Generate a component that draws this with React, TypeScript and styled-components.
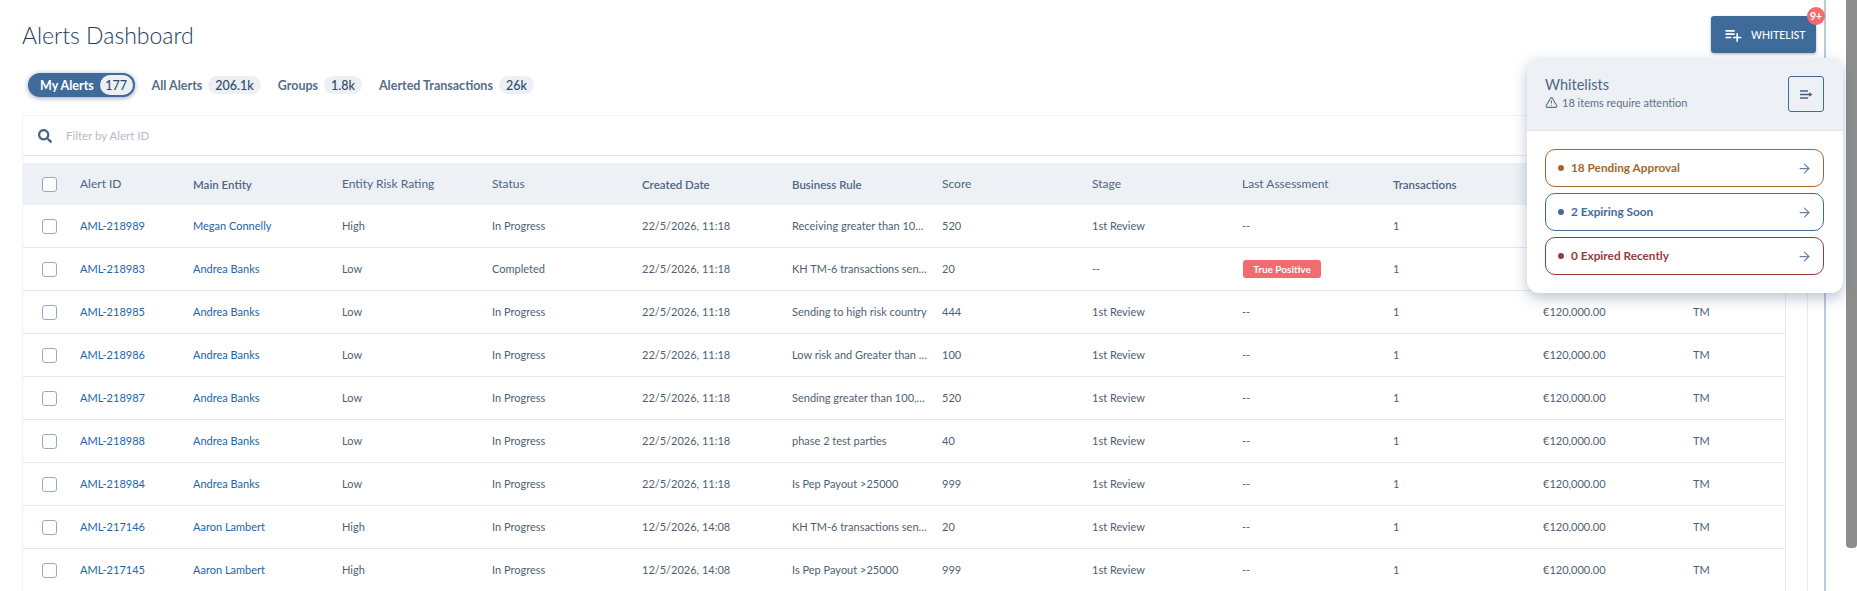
import styled, { createGlobalStyle } from 'styled-components';
import { ArrowRight, TriangleAlert } from 'lucide-react';
import { FaSearch } from 'react-icons/fa';
import { MdPlaylistAdd } from 'react-icons/md';

const GlobalStyle = createGlobalStyle`
  html, body {
    margin: 0;
    height: 100%;
    overflow: hidden;
    background: white;
  }
  * {
    box-sizing: border-box;
  }
`;

const COLUMNS = '57px 113px 149px repeat(6, 150px) 151px 150px 150px 92px';

const Page = styled.div`
  position: relative;
  display: flex;
  height: 591px;
  overflow: hidden;
  font-family: 'Lato', 'Liberation Sans', sans-serif;
  color: #46586d;
`;

const Main = styled.main`
  width: 1826px;
  padding: 16px 8px 0 22px;
  border-right: 2px solid #b9c8da;
`;

const TopBar = styled.header`
  display: flex;
  justify-content: space-between;
  align-items: flex-start;
  height: 37px;
`;

const Title = styled.h1`
  margin: 7px 0 0;
  font-size: 23px;
  line-height: 24px;
  font-weight: 300;
  color: #1c3c60;
`;

const WhitelistButton = styled.button`
  position: relative;
  display: flex;
  align-items: center;
  gap: 8px;
  width: 105px;
  height: 37px;
  padding: 0 0 0 12px;
  border: none;
  border-radius: 3px;
  background: #3f6b9b;
  box-shadow: 0 1px 3px rgba(40, 70, 110, 0.4);
  color: white;
  font-family: inherit;
  font-size: 10.5px;
  font-weight: 500;
`;

const Badge = styled.span`
  position: absolute;
  top: -9px;
  right: -9px;
  width: 18px;
  height: 18px;
  border-radius: 50%;
  background: #f26c6f;
  color: white;
  font-size: 10.5px;
  font-weight: 700;
  line-height: 18px;
  text-align: center;
`;

const Tabs = styled.nav`
  display: flex;
  align-items: center;
  gap: 17px;
  height: 24px;
  margin: 20px 0 18px 6px;
`;

const Tab = styled.div<{ $active?: boolean }>`
  display: flex;
  align-items: center;
  gap: 6px;
  height: 24px;
  padding: ${({ $active }) => ($active ? '0 2px 0 12px' : '0')};
  border-radius: 12px;
  background: ${({ $active }) => ($active ? '#3f6b9b' : 'transparent')};
  box-shadow: ${({ $active }) => ($active ? '0 1px 5px rgba(40, 70, 110, 0.5)' : 'none')};
  color: ${({ $active }) => ($active ? 'white' : '#566d88')};
  font-size: 12.5px;
  font-weight: 700;
`;

const Count = styled.span<{ $active?: boolean }>`
  display: flex;
  align-items: center;
  height: ${({ $active }) => ($active ? '20px' : '18px')};
  padding: 0 ${({ $active }) => ($active ? '5.5px' : '7px')};
  border-radius: 10px;
  background: #eceff3;
  color: #2f4a68;
  font-size: 12.5px;
  font-weight: 500;
`;

const Card = styled.section`
  width: 1786px;
  height: 476px;
  border-left: 1px solid #f2f3f6;
  border-top: 1px solid #f2f3f6;
  border-right: 1px solid #e8ebf0;
`;

const FilterBar = styled.div`
  display: flex;
  align-items: center;
  gap: 14px;
  height: 40px;
  padding-left: 15px;
  border-bottom: 1px solid #e2e5ec;
  margin-bottom: 7px;
`;

const SearchIcon = styled(FaSearch)`
  width: 14px;
  height: 14px;
  color: #466484;
`;

const FilterText = styled.span`
  color: #b3bcc7;
  font-size: 11.5px;
`;

const HeaderRow = styled.div`
  display: grid;
  grid-template-columns: ${COLUMNS};
  align-items: center;
  height: 42px;
  background: #edf1f5;
`;

const HeadCell = styled.div<{ $sorted?: boolean }>`
  padding-bottom: ${({ $sorted }) => ($sorted ? '0' : '2px')};
  color: #4e6581;
  font-size: ${({ $sorted }) => ($sorted ? '11.5px' : '12px')};
  font-weight: ${({ $sorted }) => ($sorted ? 600 : 400)};
  white-space: nowrap;
`;

const Body = styled.div`
  border-right: 1px solid #e8ebf0;
  margin-right: 21px;
`;

const Row = styled.div`
  display: grid;
  grid-template-columns: ${COLUMNS};
  align-items: center;
  height: 43px;
  border-bottom: 1px solid #e4e6ee;
`;

const Cell = styled.div<{ $link?: boolean }>`
  overflow: hidden;
  padding: 0 14px 2px 0;
  color: ${({ $link }) => ($link ? '#2264a8' : '#4f5f72')};
  font-size: 11px;
  white-space: nowrap;
  text-overflow: ellipsis;
`;

const TagCell = styled.div`
  display: flex;
  padding-left: 1px;
`;

const CheckCell = styled.div`
  display: flex;
  padding-left: 19px;
`;

const Checkbox = styled.span`
  width: 15px;
  height: 15px;
  border: 1.5px solid #97a9bf;
  border-radius: 3px;
  background: white;
`;

const Tag = styled.span`
  width: 78px;
  height: 18px;
  border-radius: 3px;
  background: #f26c6f;
  color: white;
  font-size: 10px;
  font-weight: 700;
  line-height: 18px;
  text-align: center;
`;

const Rail = styled.aside`
  width: 11px;
  margin-left: 20px;
`;

const Thumb = styled.div`
  height: 548px;
  border-radius: 0 0 4px 4px;
  background: #8e8e8e;
`;

const Popup = styled.aside`
  position: absolute;
  top: 58px;
  left: 1527px;
  width: 316px;
  height: 235px;
  overflow: hidden;
  border-radius: 12px;
  background: white;
  box-shadow: 0 5px 14px rgba(60, 90, 130, 0.35);
`;

const PopupHead = styled.div`
  display: flex;
  justify-content: space-between;
  align-items: center;
  height: 73px;
  padding: 0 19px 0 18px;
  background: #edf1f5;
  border-bottom: 1px solid #e0e5ec;
`;

const PopupText = styled.div`
  padding-bottom: 3px;
`;

const PopupTitle = styled.div`
  color: #4f6681;
  font-size: 14.5px;
  line-height: 18px;
`;

const PopupNote = styled.div`
  display: flex;
  align-items: center;
  gap: 4px;
  margin-top: 2px;
  color: #5d7088;
  font-size: 11px;
  line-height: 14px;
`;

const CollapseButton = styled.button`
  display: flex;
  align-items: center;
  justify-content: center;
  width: 36px;
  height: 36px;
  padding: 0;
  border: 1px solid #3f6b9b;
  border-radius: 3px;
  background: transparent;
`;

const PopupList = styled.div`
  display: flex;
  flex-direction: column;
  gap: 6px;
  padding: 18px 19px 18px 18px;
`;

const StatusLink = styled.div<{ $color: string }>`
  display: flex;
  align-items: center;
  height: 38px;
  padding: 0 11px 1px 12px;
  border: 1px solid ${({ $color }) => $color};
  border-radius: 10px;
  color: ${({ $color }) => $color};
  font-size: 11.8px;
  font-weight: 700;
`;

const Dot = styled.span<{ $color: string }>`
  width: 6px;
  height: 6px;
  margin-right: 7px;
  border-radius: 50%;
  background: ${({ $color }) => $color};
`;

const LinkArrow = styled(ArrowRight)`
  width: 15px;
  height: 15px;
  margin: 2px 0 0 auto;
  color: #6d84a0;
`;

const heads = [
	['Alert ID'],
	['Main Entity', true],
	['Entity Risk Rating'],
	['Status'],
	['Created Date', true],
	['Business Rule', true],
	['Score'],
	['Stage'],
	['Last Assessment'],
	['Transactions', true],
	['Amount'],
	['Type'],
] as [string, boolean?][];

const rows = [
	['AML-218989', 'Megan Connelly', 'High', 'In Progress', '22/5/2026, 11:18', 'Receiving greater than 100,000', '520', '1st Review'],
	['AML-218983', 'Andrea Banks', 'Low', 'Completed', '22/5/2026, 11:18', 'KH TM-6 transactions sending', '20', '--'],
	['AML-218985', 'Andrea Banks', 'Low', 'In Progress', '22/5/2026, 11:18', 'Sending to high risk country', '444', '1st Review'],
	['AML-218986', 'Andrea Banks', 'Low', 'In Progress', '22/5/2026, 11:18', 'Low risk and Greater than 100,000', '100', '1st Review'],
	['AML-218987', 'Andrea Banks', 'Low', 'In Progress', '22/5/2026, 11:18', 'Sending greater than 100,000', '520', '1st Review'],
	['AML-218988', 'Andrea Banks', 'Low', 'In Progress', '22/5/2026, 11:18', 'phase 2 test parties', '40', '1st Review'],
	['AML-218984', 'Andrea Banks', 'Low', 'In Progress', '22/5/2026, 11:18', 'Is Pep Payout >25000', '999', '1st Review'],
	['AML-217146', 'Aaron Lambert', 'High', 'In Progress', '12/5/2026, 14:08', 'KH TM-6 transactions sending', '20', '1st Review'],
	['AML-217145', 'Aaron Lambert', 'High', 'In Progress', '12/5/2026, 14:08', 'Is Pep Payout >25000', '999', '1st Review'],
];

const statuses = [
	{ label: '18 Pending Approval', color: '#a8672a' },
	{ label: '2 Expiring Soon', color: '#3f6b9b' },
	{ label: '0 Expired Recently', color: '#963c3f' },
];

const CollapseIcon = () => (
	<svg width="13" height="9" viewBox="0 0 13 9" fill="none">
		<path d="M0 1h8M0 4.5h9M0 8h8" stroke="#46617f" strokeWidth="1.4" />
		<path d="M9 2.2l3.6 2.3L9 6.8z" fill="#46617f" />
	</svg>
);

export default function App() {
	return (
		<Page>
			<GlobalStyle />
			<Main>
				<TopBar>
					<Title>Alerts Dashboard</Title>
					<WhitelistButton>
						<MdPlaylistAdd size={20} />
						WHITELIST
						<Badge>9+</Badge>
					</WhitelistButton>
				</TopBar>
				<Tabs>
					<Tab $active>
						My Alerts
						<Count $active>177</Count>
					</Tab>
					<Tab>
						All Alerts
						<Count>206.1k</Count>
					</Tab>
					<Tab>
						Groups
						<Count>1.8k</Count>
					</Tab>
					<Tab>
						Alerted Transactions
						<Count>26k</Count>
					</Tab>
				</Tabs>
				<Card>
					<FilterBar>
						<SearchIcon />
						<FilterText>Filter by Alert ID</FilterText>
					</FilterBar>
					<HeaderRow>
						<CheckCell>
							<Checkbox />
						</CheckCell>
						{heads.map(([label, sorted]) => (
							<HeadCell key={label} $sorted={sorted}>{label}</HeadCell>
						))}
					</HeaderRow>
					<Body>
						{rows.map((row, i) => (
							<Row key={row[0]}>
								<CheckCell>
									<Checkbox />
								</CheckCell>
								{row.map((value, col) => (
									<Cell key={col} $link={col < 2}>{value}</Cell>
								))}
								{i === 1 ? (
									<TagCell>
										<Tag>True Positive</Tag>
									</TagCell>
								) : (
									<Cell>--</Cell>
								)}
								<Cell>1</Cell>
								<Cell>€120,000.00</Cell>
								<Cell>TM</Cell>
							</Row>
						))}
					</Body>
				</Card>
			</Main>
			<Rail>
				<Thumb />
			</Rail>
			<Popup>
				<PopupHead>
					<PopupText>
						<PopupTitle>Whitelists</PopupTitle>
						<PopupNote>
							<TriangleAlert size={13} />
							18 items require attention
						</PopupNote>
					</PopupText>
					<CollapseButton>
						<CollapseIcon />
					</CollapseButton>
				</PopupHead>
				<PopupList>
					{statuses.map(({ label, color }) => (
						<StatusLink key={label} $color={color}>
							<Dot $color={color} />
							{label}
							<LinkArrow />
						</StatusLink>
					))}
				</PopupList>
			</Popup>
		</Page>
	);
}
